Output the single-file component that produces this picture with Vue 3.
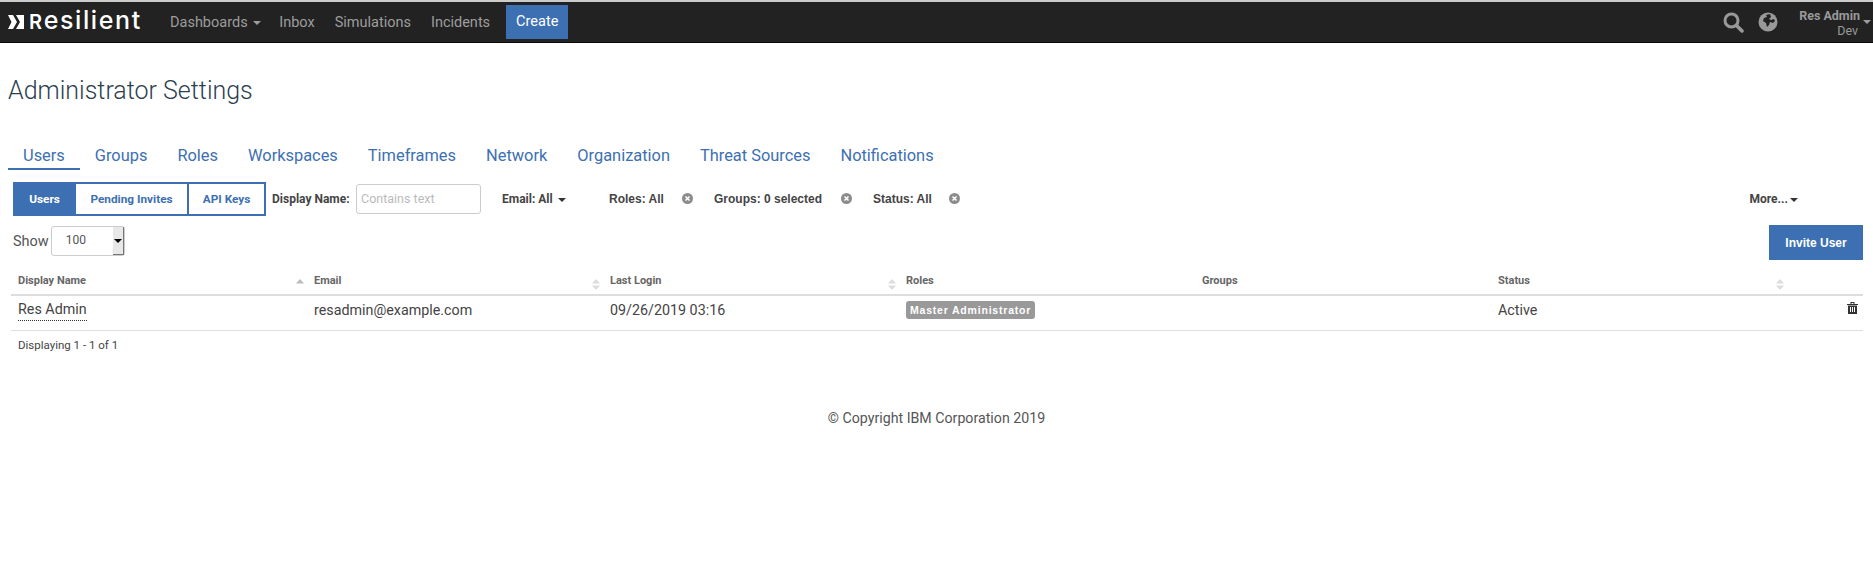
<template>
  <div class="page">
    <header class="navbar">
      <div class="brand">
        <svg class="brand-mark" width="16" height="14" viewBox="0 0 16 14">
          <path d="M0 0h5l4 7-4 7H0l3.500-7z" fill="#fff" />
          <path d="M8 0h8v14H8l4-7z" fill="#fff" />
        </svg>
        <span class="brand-name"><span class="brand-r">R</span>esilient</span>
      </div>
      <nav class="nav-links">
        <a class="dashboards">Dashboards <i class="caret"></i></a>
        <a>Inbox</a>
        <a>Simulations</a>
        <a>Incidents</a>
        <a class="create">Create</a>
      </nav>
      <div class="nav-right">
        <svg width="22" height="22" viewBox="0 0 22 22" class="search">
          <circle cx="9.500" cy="9.500" r="6.500" fill="none" stroke="#999" stroke-width="3" />
          <path d="M14.500 14.500L20 20" stroke="#999" stroke-width="3.500" stroke-linecap="round" />
        </svg>
        <svg width="20" height="20" viewBox="0 0 20 20" class="globe">
          <circle cx="10" cy="10" r="9.500" fill="#999" />
          <path d="M8 3l4-1 1 3-2 2 2 1 3-1 1 2-2 2-3-1-1 3-2 2-1-4-3-2 1-3 3-1z" fill="#222" />
        </svg>
        <div class="user">
          <div class="user-name">Res Admin</div>
          <div class="user-org">Dev</div>
        </div>
        <i class="caret user-caret"></i>
      </div>
    </header>

    <h1>Administrator Settings</h1>

    <div class="tabs">
      <a v-for="(t, i) in tabs" :key="t" :class="{ active: i === 0 }">{{ t }}</a>
    </div>

    <div class="filters">
      <div class="btn-group">
        <span class="on">Users</span>
        <span>Pending Invites</span>
        <span>API Keys</span>
      </div>
      <label class="name-label">Display Name:</label>
      <div class="text-input">Contains text</div>
      <span class="email-filter">Email: All <i class="caret dark"></i></span>
      <span v-for="f in clearable" :key="f.label" class="filter" :style="{ width: f.width + 'px' }">
        <span>{{ f.label }}</span>
        <svg width="11" height="11" viewBox="0 0 11 11">
          <circle cx="5.500" cy="5.500" r="5.500" fill="#8c8c8c" />
          <path d="M3.500 3.500l4 4m0-4l-4 4" stroke="#fff" stroke-width="1.600" />
        </svg>
      </span>
      <span class="more">More...<i class="caret dark"></i></span>
    </div>

    <div class="show-row">
      <div class="show">
        <span>Show</span>
        <div class="select">
          <span class="select-value">100</span>
          <span class="select-arrow"><i class="caret black"></i></span>
        </div>
      </div>
      <button class="invite">Invite User</button>
    </div>

    <table>
      <colgroup>
        <col v-for="n in 6" :key="n" class="col" />
        <col />
      </colgroup>
      <thead>
        <tr>
          <th v-for="(c, i) in columns" :key="c.label">
            {{ c.label }}
            <svg v-if="c.sort" class="sort" width="8" height="11" viewBox="0 0 8 11">
              <path d="M4 0l4 4.500H0z" :fill="i === 0 ? '#bbb' : '#ddd'" />
              <path v-if="i > 0" d="M4 11l4-4.500H0z" fill="#ddd" />
            </svg>
          </th>
          <th></th>
        </tr>
      </thead>
      <tbody>
        <tr>
          <td><span class="dotted">Res Admin</span></td>
          <td>resadmin@example.com</td>
          <td>09/26/2019 03:16</td>
          <td><span class="badge">Master Administrator</span></td>
          <td></td>
          <td>Active</td>
          <td class="trash-cell">
            <svg width="11" height="12" viewBox="0 0 11 12">
              <path d="M0 2h11v1H0zM3.500 0h4v2h-1V1h-2v1h-1z" fill="#333" />
              <path d="M1 3.500h9V12H1zM3 5v5h1V5zm2 0v5h1V5zm2 0v5h1V5z" fill="#333" fill-rule="evenodd" />
            </svg>
          </td>
        </tr>
      </tbody>
    </table>

    <div class="count">Displaying 1 - 1 of 1</div>

    <footer>© Copyright IBM Corporation 2019</footer>
  </div>
</template>

<script setup>
const tabs = ['Users', 'Groups', 'Roles', 'Workspaces', 'Timeframes', 'Network', 'Organization', 'Threat Sources', 'Notifications']

const clearable = [
  { label: 'Roles: All', width: 84 },
  { label: 'Groups: 0 selected', width: 138 },
  { label: 'Status: All', width: 87 }
]

const columns = [
  { label: 'Display Name', sort: true },
  { label: 'Email', sort: true },
  { label: 'Last Login', sort: true },
  { label: 'Roles', sort: false },
  { label: 'Groups', sort: false },
  { label: 'Status', sort: true }
]
</script>

<style>
html, body {
  background: #fff;
}
</style>

<style scoped>
.page {
  font-family: Roboto, "Noto Sans", sans-serif;
  color: #333;
  font-size: 14px;
  height: 566px;
  overflow: hidden;
}

.navbar {
  display: flex;
  align-items: center;
  height: 40px;
  background: #222;
  border-top: 2px solid #ccc;
  border-bottom: 1px solid #080808;
}

.brand {
  display: flex;
  align-items: center;
  padding-left: 8px;
  width: 160px;
  box-sizing: border-box;
}

.brand-mark {
  margin-right: 5px;
}

.brand-name {
  font-family: Inter, sans-serif;
  font-size: 25px;
  font-weight: 500;
  color: #fff;
  line-height: 1;
  letter-spacing: 1.6px;
  margin-top: -3px;
}

.brand-r {
  font-size: 20px;
  font-weight: 600;
}

.nav-links {
  display: flex;
  align-items: center;
  height: 100%;
}

.nav-links a {
  color: #9d9d9d;
  font-size: 14.5px;
  padding: 0 10px;
}

.nav-links a.dashboards {
  margin-right: -2px;
}

.nav-links a.create {
  background: #3d70b2;
  color: #fff;
  line-height: 34px;
  margin-left: 6px;
}

.caret {
  display: inline-block;
  width: 0;
  height: 0;
  border-top: 4px solid #9d9d9d;
  border-left: 4px solid transparent;
  border-right: 4px solid transparent;
  vertical-align: middle;
  margin-left: 2px;
}

.caret.dark {
  border-top-color: #333;
}

.caret.black {
  border-top-color: #000;
  margin: 0;
}

.nav-right {
  display: flex;
  align-items: center;
  margin-left: auto;
  position: relative;
}

.search {
  margin-right: 14px;
}

.globe {
  margin-right: 21px;
}

.user {
  text-align: right;
  font-size: 12.5px;
  line-height: 15px;
  color: #999;
  margin-right: 3px;
  margin-top: 1px;
}

.user-name {
  font-weight: 700;
}

.user-org {
  padding-right: 2px;
}

.user-caret {
  margin: 0 2px 0 0;
}

h1 {
  margin: 32px 0 0 8px;
  font-size: 25px;
  font-weight: 300;
  line-height: 32px;
  color: #2d3f4f;
}

.tabs {
  display: flex;
  margin: 37px 0 0 8px;
  font-size: 16.4px;
  color: #3d70b2;
}

.tabs a {
  padding: 0 15px 1px;
  line-height: 23px;
}

.tabs a.active {
  border-bottom: 2px solid #3d70b2;
}

.filters {
  display: flex;
  align-items: center;
  margin: 12px 0 0 13px;
  height: 34px;
  font-size: 12px;
  font-weight: 700;
  color: #444;
  position: relative;
}

.btn-group {
  display: flex;
  height: 34px;
  border: 2px solid #3d70b2;
  box-sizing: border-box;
  color: #3d70b2;
  font-size: 11.8px;
  line-height: 30px;
}

.btn-group span {
  box-sizing: border-box;
  text-align: center;
  border-left: 2px solid #3d70b2;
}

.btn-group span:nth-child(1) {
  width: 59px;
  background: #3d70b2;
  color: #fff;
  border-left: 0;
}

.btn-group span:nth-child(2) {
  width: 113px;
}

.btn-group span:nth-child(3) {
  width: 77px;
}

.name-label {
  width: 84px;
  margin-left: 6px;
}

.text-input {
  width: 125px;
  height: 30px;
  box-sizing: border-box;
  border: 1px solid #ccc;
  border-radius: 3px;
  padding: 0 4px;
  line-height: 27px;
  color: #bbb;
  font-weight: 400;
  font-size: 12.5px;
}

.email-filter {
  margin-left: 21px;
  width: 107px;
}

.filter {
  display: flex;
  align-items: center;
  justify-content: space-between;
  box-sizing: border-box;
  margin-right: 21px;
  font-family: "Liberation Sans", sans-serif;
}

.filter svg {
  margin-top: -2px;
}

.more {
  position: absolute;
  right: 75px;
  top: 10px;
}

.show-row {
  display: flex;
  justify-content: space-between;
  align-items: flex-start;
  margin: 10px 10px 0 13px;
}

.show {
  display: flex;
  align-items: center;
  gap: 2px;
  color: #555;
  font-size: 14.5px;
}

.select {
  display: flex;
  width: 74px;
  height: 30px;
  box-sizing: border-box;
  border: 1px solid #ccc;
  border-radius: 3px;
  font-size: 12px;
}

.select-value {
  flex: 1;
  padding-left: 14px;
  line-height: 27px;
}

.select-arrow {
  display: flex;
  width: 10px;
  align-items: center;
  justify-content: center;
  background: #e8e8e8;
  border-right: 1px solid #777;
  border-bottom: 1px solid #777;
}

.invite {
  width: 94px;
  height: 35px;
  margin-top: -1px;
  padding: 0;
  border: 0;
  background: #3d70b2;
  color: #fff;
  font-family: "Liberation Sans", sans-serif;
  font-size: 12px;
  font-weight: 700;
}

table {
  width: 1852px;
  margin: 8px 0 0 11px;
  border-collapse: collapse;
  table-layout: fixed;
}

.col {
  width: 296px;
}

th {
  position: relative;
  height: 27px;
  padding: 0 7px 1px;
  text-align: left;
  font-size: 11px;
  font-weight: 700;
  color: #666;
  border-bottom: 2px solid #ddd;
  box-sizing: border-box;
}

.sort {
  position: absolute;
  right: 3px;
  top: 11px;
}

td {
  height: 35px;
  padding: 0 7px 6px;
  font-size: 14.3px;
  color: #444;
  border-bottom: 1px solid #ddd;
  box-sizing: border-box;
}

.dotted {
  display: inline-block;
  line-height: 21px;
  border-bottom: 1px dotted #333;
}

.badge {
  display: inline-block;
  background: #999;
  color: #fff;
  font-family: "Liberation Sans", sans-serif;
  font-size: 10.5px;
  font-weight: 700;
  line-height: 18px;
  padding: 0 4px;
  border-radius: 3px;
  letter-spacing: 0.8px;
}

.trash-cell {
  text-align: right;
  padding: 0 5px 8px 0;
}

.count {
  margin: 6px 0 0 18px;
  font-size: 11.5px;
  line-height: 16px;
  color: #444;
}

footer {
  margin-top: 55px;
  text-align: center;
  font-size: 14.2px;
  line-height: 20px;
  color: #555;
}
</style>
